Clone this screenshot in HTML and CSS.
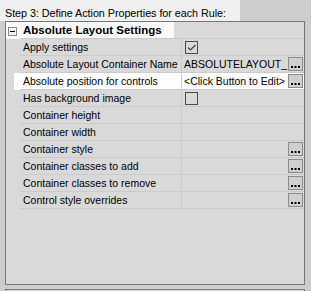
FILE: index.html
```html
<!DOCTYPE html>
<html lang="en">
<head>
<meta charset="UTF-8">
<title>Action Properties</title>
<link rel="stylesheet" href="styles.css">
</head>
<body>
  <div class="title">Step 3: Define Action Properties for each Rule:</div>
  <div class="panel">
    <div class="row header">
      <span class="gutter"><span class="toggle"></span></span>
      <span class="label">Absolute Layout Settings</span>
      <span class="value"></span>
    </div>
    <div class="row">
      <span class="gutter"></span>
      <span class="label">Apply settings</span>
      <span class="value">
        <span class="check">
          <svg width="11" height="11" viewBox="0 0 11 11"><path d="M2 5.5 L4.5 8 L9.5 3" fill="none" stroke="#444" stroke-width="1.2"/></svg>
        </span>
      </span>
    </div>
    <div class="row">
      <span class="gutter"></span>
      <span class="label">Absolute Layout Container Name</span>
      <span class="value"><span class="text">ABSOLUTELAYOUT_</span><span class="dots"><svg width="13" height="12" viewBox="0 0 13 12"><rect x="2" y="8" width="2" height="2"/><rect x="5.5" y="8" width="2" height="2"/><rect x="9" y="8" width="2" height="2"/></svg></span></span>
    </div>
    <div class="row selected">
      <span class="gutter"></span>
      <span class="label">Absolute position for controls</span>
      <span class="value"><span class="text">&lt;Click Button to Edit&gt;</span><span class="dots"><svg width="13" height="12" viewBox="0 0 13 12"><rect x="2" y="8" width="2" height="2"/><rect x="5.5" y="8" width="2" height="2"/><rect x="9" y="8" width="2" height="2"/></svg></span></span>
    </div>
    <div class="row">
      <span class="gutter"></span>
      <span class="label">Has background image</span>
      <span class="value"><span class="check"></span></span>
    </div>
    <div class="row">
      <span class="gutter"></span>
      <span class="label">Container height</span>
      <span class="value"></span>
    </div>
    <div class="row">
      <span class="gutter"></span>
      <span class="label">Container width</span>
      <span class="value"></span>
    </div>
    <div class="row">
      <span class="gutter"></span>
      <span class="label">Container style</span>
      <span class="value"><span class="text"></span><span class="dots"><svg width="13" height="12" viewBox="0 0 13 12"><rect x="2" y="8" width="2" height="2"/><rect x="5.5" y="8" width="2" height="2"/><rect x="9" y="8" width="2" height="2"/></svg></span></span>
    </div>
    <div class="row">
      <span class="gutter"></span>
      <span class="label">Container classes to add</span>
      <span class="value"><span class="text"></span><span class="dots"><svg width="13" height="12" viewBox="0 0 13 12"><rect x="2" y="8" width="2" height="2"/><rect x="5.5" y="8" width="2" height="2"/><rect x="9" y="8" width="2" height="2"/></svg></span></span>
    </div>
    <div class="row">
      <span class="gutter"></span>
      <span class="label">Container classes to remove</span>
      <span class="value"><span class="text"></span><span class="dots"><svg width="13" height="12" viewBox="0 0 13 12"><rect x="2" y="8" width="2" height="2"/><rect x="5.5" y="8" width="2" height="2"/><rect x="9" y="8" width="2" height="2"/></svg></span></span>
    </div>
    <div class="row">
      <span class="gutter"></span>
      <span class="label">Control style overrides</span>
      <span class="value"><span class="text"></span><span class="dots"><svg width="13" height="12" viewBox="0 0 13 12"><rect x="2" y="8" width="2" height="2"/><rect x="5.5" y="8" width="2" height="2"/><rect x="9" y="8" width="2" height="2"/></svg></span></span>
    </div>
  </div>
  <div class="panel next"></div>
</body>
</html>
```

FILE: styles.css
```css
body {
  margin: 0;
  padding: 0;
  font-family: "Liberation Sans", Arial, sans-serif;
  font-size: 10.5px;
  color: #000000;
  background-color: #cdcdcd; /* window gray */
  overflow: hidden;
}

.title {
  width: 235px;
  height: 15px;
  padding: 6px 0 0 5px;
  line-height: 15px;
  font-size: 10.8px;
  letter-spacing: -0.05px;
  background-color: #f0f0f0;
  white-space: nowrap;
}

.panel {
  width: 298px;
  height: 262px;
  margin-left: 5px;
  border: 1px solid #76767c;
  background-color: #d9d9d9;
}

.panel.next {
  height: 1px;
  margin-top: 4px;
  border-bottom: none;
}

.row {
  display: grid;
  grid-template-columns: 14px 162px 1fr;
  height: 17px;
  line-height: 16px;
}

.row .label {
  padding-left: 3px;
  border-bottom: 1px solid #cbcbcb;
  border-right: 1px solid #cbcbcb;
  white-space: nowrap;
  overflow: hidden;
}

.row .value {
  display: flex;
  align-items: center;
  padding-left: 2px;
  border-bottom: 1px solid #cbcbcb;
  overflow: hidden;
}

.header {
  font-weight: bold;
  font-size: 11.5px;
  background: linear-gradient(to right, #fafafa 168px, transparent 168px);
}

.header .label,
.header .value {
  border-right-color: transparent;
}

.selected {
  background: linear-gradient(to right, transparent 8px, #ffffff 8px);
}

.gutter {
  display: flex;
  align-items: center;
}

.toggle {
  position: relative;
  width: 7px;
  height: 7px;
  margin: 1px 0 0 2px;
  border: 1px solid #8c8c8c;
  background-color: #f4f4f4;
}

.toggle::after {
  content: "";
  position: absolute;
  left: 1px;
  top: 3px;
  width: 5px;
  height: 1px;
  background-color: #000000;
}

.check {
  display: flex;
  align-items: center;
  justify-content: center;
  width: 11px;
  height: 11px;
  margin-left: 1px;
  border: 1px solid #4a4a4a;
}

.value .text {
  flex: 1;
  white-space: nowrap;
  overflow: hidden;
}

.dots {
  display: flex;
  width: 13px;
  height: 12px;
  margin-left: auto;
  margin-right: 1px;
  border: 1px solid #8c8c8c;
  background-color: #d0d0d0;
}
```
